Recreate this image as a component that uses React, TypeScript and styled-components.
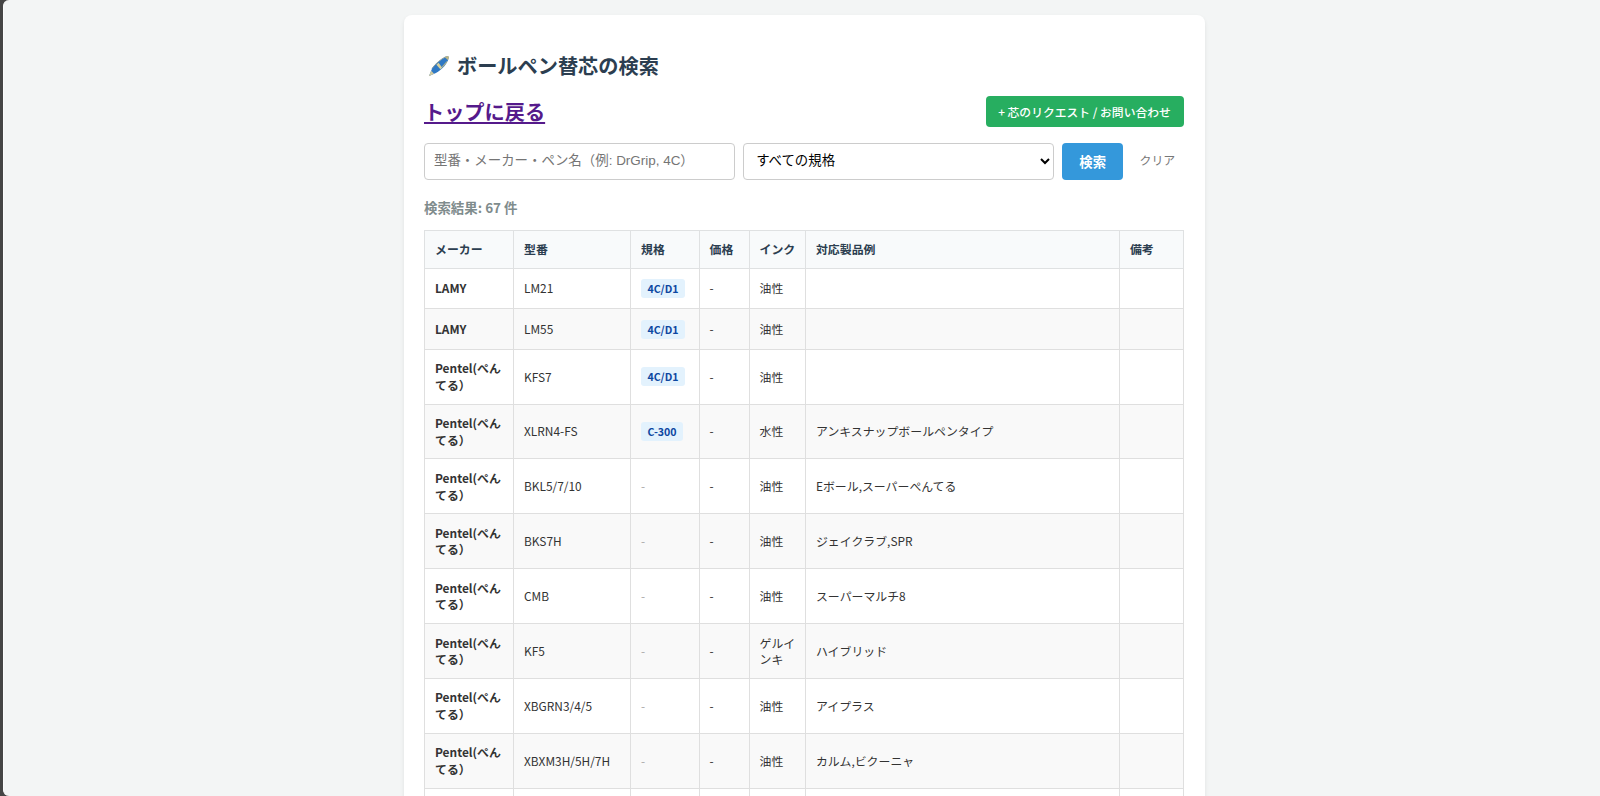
import React from "react";
import styled, { createGlobalStyle } from "styled-components";

const GlobalStyle = createGlobalStyle`
  * { box-sizing: border-box; }
  html { background: #454545; }
  body {
    margin: 0;
    background: #454545;
    color: #333;
    font-family: "Noto Sans CJK JP", "Noto Sans", sans-serif;
    overflow: hidden;
  }
`;

const Page = styled.main`
  height: 796px;
  margin-left: 3px;
  padding: 15px 0 0 399.6px;
  background: #f3f5f5;
  border-left: 1px solid #fbfcfc;
  border-radius: 6px 0 0 6px;
  overflow: hidden;
`;

const Card = styled.section`
  width: 801.6px;
  height: 900px;
  padding: 36px 21.2px 0 20.4px;
  background: #fff;
  border-radius: 8px;
  box-shadow: 0 2px 4px rgba(0, 0, 0, 0.08);
`;

const Title = styled.h1`
  display: flex;
  align-items: center;
  gap: 7px;
  height: 30px;
  margin: 0;
  padding-left: 4px;
  color: #2c3e50;
  font-size: 20.2px;
  font-weight: 700;
  line-height: 30px;
`;

const PenIcon = styled.svg`
  width: 22px;
  height: 22px;
`;

const LinkRow = styled.div`
  display: flex;
  justify-content: space-between;
  align-items: center;
  height: 31px;
  margin-top: 15px;
`;

const BackLink = styled.a`
  color: #551a8b;
  font-size: 20.2px;
  font-weight: 700;
  line-height: 30px;
  text-decoration: underline;
`;

const RequestButton = styled.a`
  display: flex;
  align-items: center;
  justify-content: center;
  width: 198px;
  height: 31px;
  padding-right: 1px;
  border-radius: 4px;
  background: #27ae60;
  color: #fff;
  font-size: 11.8px;
  font-weight: 500;
  white-space: nowrap;
`;

const SearchForm = styled.form`
  display: flex;
  gap: 8.2px;
  height: 37px;
  margin: 16px 0 0;
`;

const SearchInput = styled.input`
  width: 311px;
  height: 37px;
  padding: 0 9px 2px;
  border: 1px solid #ccc;
  border-radius: 4px;
  background: #fff;
  font-family: "Liberation Sans", "Noto Sans CJK JP", sans-serif;
  font-size: 13.45px;
  &::placeholder { color: #757575; }
`;

const StandardSelect = styled.select`
  width: 311px;
  height: 37px;
  padding: 0 0 2px 8px;
  border: 1px solid #ccc;
  border-radius: 4px;
  background: #fff;
  color: #000;
  font-family: "Liberation Sans", "Noto Sans CJK JP", sans-serif;
  font-size: 13.4px;
`;

const SearchButton = styled.button`
  width: 60.6px;
  height: 37px;
  padding: 0 0 1px;
  border: 0;
  border-radius: 4px;
  background: #3498db;
  color: #fff;
  font-family: inherit;
  font-size: 13.4px;
  font-weight: 700;
`;

const ClearLink = styled.a`
  padding-left: 8.4px;
  color: #777;
  font-size: 11.9px;
  line-height: 34px;
`;

const ResultCount = styled.p`
  height: 20px;
  margin: 17px 0 13px;
  color: #7f8c8d;
  font-size: 13.45px;
  font-weight: 700;
  line-height: 20px;
`;

const Table = styled.table`
  width: 759px;
  table-layout: fixed;
  border-collapse: collapse;
  font-size: 11.9px;
  line-height: 16.6px;
`;

const Col = styled.col<{ $width: number }>`
  width: ${(p) => p.$width}px;
`;

const HeadCell = styled.th`
  height: 37.7px;
  padding: 0 8px 0 10px;
  border: 1px solid #dfe1e2;
  background: #f8fafb;
  color: #2c3e50;
  font-weight: 700;
  text-align: left;
`;

const Row = styled.tr<{ $height: number }>`
  height: ${(p) => p.$height}px;
  &:nth-child(even) { background: #f9f9f9; }
`;

const Cell = styled.td<{ $strong?: boolean }>`
  padding: 0.4px 8px 0 10px;
  border: 1px solid #dfdfdf;
  font-weight: ${(p) => (p.$strong ? 700 : 400)};
  vertical-align: middle;
`;

const Badge = styled.span`
  display: inline-block;
  height: 19px;
  padding: 0 6.4px;
  border-radius: 3px;
  background: #e3f2fd;
  color: #0d47a1;
  font-size: 10.6px;
  font-weight: 700;
  line-height: 19px;
  vertical-align: middle;
`;

const Muted = styled.span`
  color: #aaa;
`;

interface Refill {
  maker: string;
  model: string;
  standard?: string;
  ink: string;
  products?: string;
}

const PENTEL = "Pentel(ぺんてる）";

const refills: Refill[] = [
  { maker: "LAMY", model: "LM21", standard: "4C/D1", ink: "油性" },
  { maker: "LAMY", model: "LM55", standard: "4C/D1", ink: "油性" },
  { maker: PENTEL, model: "KFS7", standard: "4C/D1", ink: "油性" },
  { maker: PENTEL, model: "XLRN4-FS", standard: "C-300", ink: "水性", products: "アンキスナップボールペンタイプ" },
  { maker: PENTEL, model: "BKL5/7/10", ink: "油性", products: "Eボール,スーパーぺんてる" },
  { maker: PENTEL, model: "BKS7H", ink: "油性", products: "ジェイクラブ,SPR" },
  { maker: PENTEL, model: "CMB", ink: "油性", products: "スーパーマルチ8" },
  { maker: PENTEL, model: "KF5", ink: "ゲルインキ", products: "ハイブリッド" },
  { maker: PENTEL, model: "XBGRN3/4/5", ink: "油性", products: "アイプラス" },
  { maker: PENTEL, model: "XBXM3H/5H/7H", ink: "油性", products: "カルム,ビクーニャ" },
];

const columnWidths = [89, 117, 68.6, 50, 56.4, 314, 64];
const headings = ["メーカー", "型番", "規格", "価格", "インク", "対応製品例", "備考"];

export default function App() {
  return (
    <>
      <GlobalStyle />
      <Page>
        <Card>
          <Title>
            <PenIcon viewBox="0 0 21 21" aria-hidden="true">
              <path d="M1 20 4 12.6C7.4 8 12 4.2 17 1.6 18.6.9 20 1 19.7 2.8 18.4 8.4 14 13.4 7.6 17.2Z" fill="#2f78c4" />
              <path d="M4 12.6C7.4 8 12 4.2 17 1.6" fill="none" stroke="#8b9c98" strokeWidth=".9" />
              <path d="M.8 20.4 3 15 5.8 18Z" fill="#d0c99f" />
              <path d="m10 7.4 3.6 4.8-1.8 1.5-3.8-4.4Z" fill="#d6cf9c" />
              <path d="M16 2.1 18.6 1c1.1-.2 1.5.6 1.2 1.8L19.2 5Z" fill="#bdb583" />
              <path d="m18.2 6.2-4.6 5.4" stroke="#b9b587" strokeWidth="1" />
            </PenIcon>
            ボールペン替芯の検索
          </Title>
          <LinkRow>
            <BackLink>トップに戻る</BackLink>
            <RequestButton>+ 芯のリクエスト / お問い合わせ</RequestButton>
          </LinkRow>
          <SearchForm>
            <SearchInput placeholder="型番・メーカー・ペン名（例: DrGrip, 4C）" />
            <StandardSelect>
              <option>すべての規格</option>
            </StandardSelect>
            <SearchButton type="button">検索</SearchButton>
            <ClearLink>クリア</ClearLink>
          </SearchForm>
          <ResultCount>検索結果: 67 件</ResultCount>
          <Table>
            <colgroup>
              {columnWidths.map((w, i) => <Col key={i} $width={w} />)}
            </colgroup>
            <thead>
              <tr>{headings.map((h) => <HeadCell key={h}>{h}</HeadCell>)}</tr>
            </thead>
            <tbody>
              {refills.map((r) => (
                <Row key={r.model} $height={r.maker === PENTEL ? 54.86 : 40.5}>
                  <Cell $strong>{r.maker}</Cell>
                  <Cell>{r.model}</Cell>
                  <Cell>{r.standard ? <Badge>{r.standard}</Badge> : <Muted>-</Muted>}</Cell>
                  <Cell>-</Cell>
                  <Cell>{r.ink}</Cell>
                  <Cell>{r.products}</Cell>
                  <Cell />
                </Row>
              ))}
              <Row $height={54.86}>
                {headings.map((h) => <Cell key={h} />)}
              </Row>
            </tbody>
          </Table>
        </Card>
      </Page>
    </>
  );
}
